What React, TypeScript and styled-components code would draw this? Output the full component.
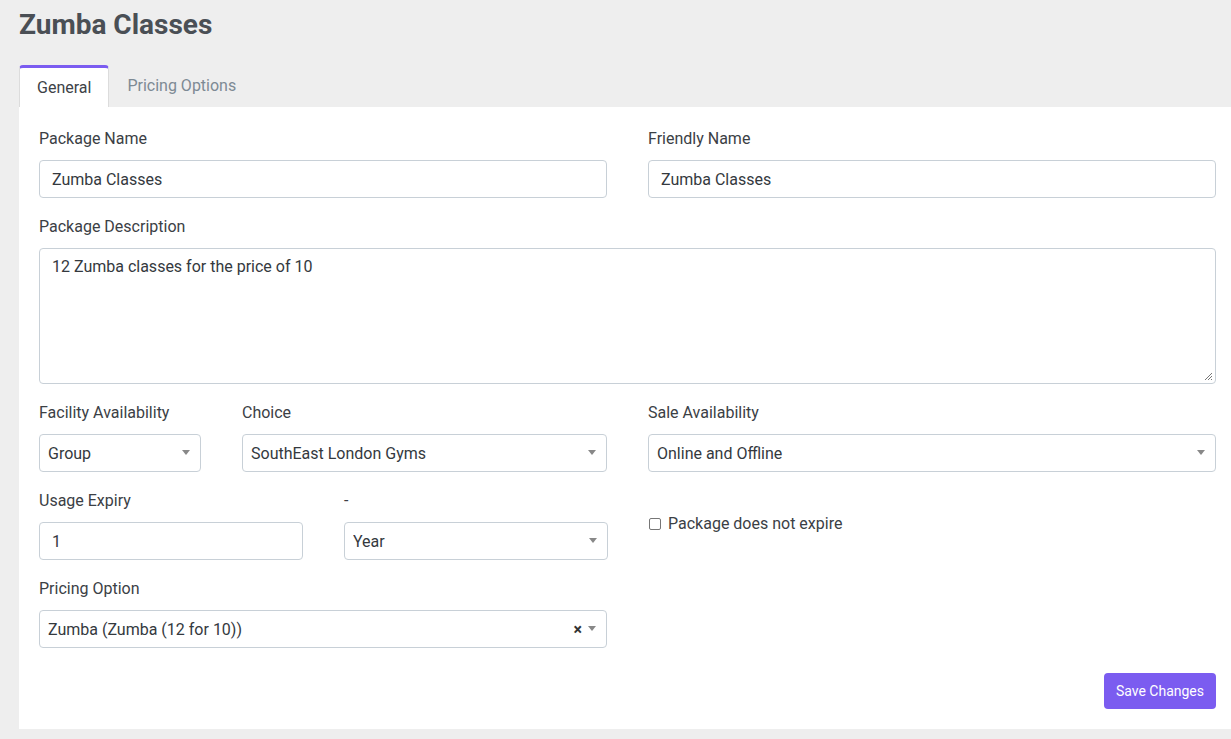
import styled, { createGlobalStyle } from "styled-components";

const GlobalStyle = createGlobalStyle`
  html, body {
    margin: 0;
    padding: 0;
    background: #eeeeee;
    font-family: Roboto, "Liberation Sans", Arial, sans-serif;
    overflow: hidden;
  }
  * { box-sizing: border-box; }
`;

const Page = styled.div`
  width: 1231px;
  height: 739px;
  padding: 0 0 0 19px;
  overflow: hidden;
`;

const Title = styled.h1`
  margin: 0;
  padding-top: 8px;
  height: 65px;
  font-size: 28px;
  font-weight: 700;
  color: #4a4f55;
  line-height: 34px;
`;

const Tabs = styled.div`
  display: flex;
  align-items: flex-end;
  height: 42px;
`;

const Tab = styled.div<{ $active?: boolean }>`
  height: 42px;
  padding: 0 17px;
  display: flex;
  align-items: center;
  font-size: 16px;
  color: ${(p) => (p.$active ? "#3d4247" : "#7d8a94")};
  background: ${(p) => (p.$active ? "#ffffff" : "transparent")};
  border-top: 3px solid ${(p) => (p.$active ? "#7b5cf0" : "transparent")};
  border-left: 1px solid ${(p) => (p.$active ? "#dcdcdc" : "transparent")};
  border-right: 1px solid ${(p) => (p.$active ? "#dcdcdc" : "transparent")};
  border-radius: 4px 4px 0 0;
  padding-bottom: ${(p) => (p.$active ? "0" : "5px")};
`;

const Card = styled.div`
  background: #ffffff;
  width: 1217px;
  padding: 21px 20px 20px 20px;
`;

const Row = styled.div<{ $cols: string }>`
  display: grid;
  grid-template-columns: ${(p) => p.$cols};
  column-gap: 41px;
  align-items: start;
`;

const Group = styled.div`
  margin-bottom: 18px;
  min-width: 0;
`;

const Label = styled.label`
  display: block;
  font-size: 16px;
  line-height: 20px;
  color: #3b4045;
  margin-bottom: 12px;
  padding-top: 1px;
  height: 20px;
`;

const Input = styled.div`
  height: 38px;
  border: 1px solid #c8d0d7;
  border-radius: 4px;
  padding: 0 12px;
  display: flex;
  align-items: center;
  font-size: 16px;
  color: #34393e;
`;

const TextArea = styled.div`
  position: relative;
  height: 136px;
  border: 1px solid #c8d0d7;
  border-radius: 4px;
  padding: 8px 12px;
  font-size: 16px;
  line-height: 20px;
  color: #34393e;
`;

const Grip = styled.svg`
  position: absolute;
  right: 2px;
  bottom: 2px;
`;

const Select = styled.div`
  height: 38px;
  border: 1px solid #c8d0d7;
  border-radius: 4px;
  padding: 0 8px;
  display: flex;
  align-items: center;
  gap: 6px;
  font-size: 16px;
  color: #34393e;
`;

const SelectText = styled.span`
  flex: 1;
  white-space: nowrap;
  overflow: hidden;
`;

const Arrow = styled.span`
  width: 0;
  height: 0;
  border-left: 4px solid transparent;
  border-right: 4px solid transparent;
  border-top: 5px solid #888888;
  margin-right: 2px;
  margin-top: -2px;
`;

const Clear = styled.span`
  font-size: 16px;
  font-weight: 700;
  color: #333333;
  line-height: 1;
  margin-top: 1px;
`;

const CheckRow = styled.label`
  display: flex;
  align-items: center;
  gap: 7px;
  padding-top: 24px;
  font-size: 16px;
  line-height: 20px;
  color: #3b4045;
`;

const Box = styled.span`
  width: 12px;
  height: 12px;
  border: 1px solid #767676;
  border-radius: 2px;
  background: #fff;
`;

const Footer = styled.div`
  display: flex;
  justify-content: flex-end;
  padding-top: 7px;
`;

const Button = styled.button`
  height: 36px;
  padding: 0 12px;
  border: none;
  border-radius: 4px;
  background: #7b5cf0;
  color: #ffffff;
  font-family: inherit;
  font-size: 14px;
  font-weight: 400;
`;

function SelectBox({ value, clearable }: { value: string; clearable?: boolean }) {
  return (
    <Select>
      <SelectText>{value}</SelectText>
      {clearable && <Clear>×</Clear>}
      <Arrow />
    </Select>
  );
}

export default function App() {
  return (
    <>
      <GlobalStyle />
      <Page>
        <Title>Zumba Classes</Title>
        <Tabs>
          <Tab $active>General</Tab>
          <Tab>Pricing Options</Tab>
        </Tabs>
        <Card>
          <Row $cols="1fr 1fr">
            <Group>
              <Label>Package Name</Label>
              <Input>Zumba Classes</Input>
            </Group>
            <Group>
              <Label>Friendly Name</Label>
              <Input>Zumba Classes</Input>
            </Group>
          </Row>
          <Group>
            <Label>Package Description</Label>
            <TextArea>
              12 Zumba classes for the price of 10
              <Grip width="10" height="10" viewBox="0 0 10 10">
                <path d="M9 2 L2 9 M9 5 L5 9 M9 8 L8 9" stroke="#777" strokeWidth="1" />
              </Grip>
            </TextArea>
          </Group>
          <Row $cols="162px 365px 1fr">
            <Group>
              <Label>Facility Availability</Label>
              <SelectBox value="Group" />
            </Group>
            <Group>
              <Label>Choice</Label>
              <SelectBox value="SouthEast London Gyms" />
            </Group>
            <Group>
              <Label>Sale Availability</Label>
              <SelectBox value="Online and Offline" />
            </Group>
          </Row>
          <Row $cols="264px 264px 1fr">
            <Group>
              <Label>Usage Expiry</Label>
              <Input>1</Input>
            </Group>
            <Group>
              <Label>-</Label>
              <SelectBox value="Year" />
            </Group>
            <CheckRow>
              <Box />
              Package does not expire
            </CheckRow>
          </Row>
          <Row $cols="1fr 1fr">
            <Group>
              <Label>Pricing Option</Label>
              <SelectBox value="Zumba (Zumba (12 for 10))" clearable />
            </Group>
          </Row>
          <Footer>
            <Button>Save Changes</Button>
          </Footer>
        </Card>
      </Page>
    </>
  );
}
